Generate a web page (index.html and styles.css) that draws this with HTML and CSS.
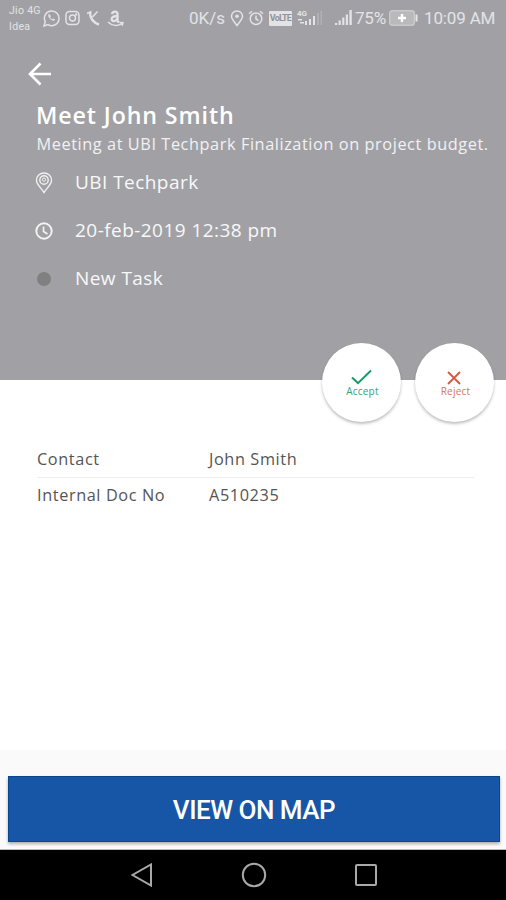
FILE: index.html
```
<!DOCTYPE html>
<html lang="en">
<head>
<meta charset="utf-8">
<title>Task details</title>
<link rel="stylesheet" href="styles.css">
</head>
<body>
<div class="screen">
  <header class="hero">
    <div class="status">
      <div class="carriers"><span>Jio 4G</span><span>Idea</span></div>
      <svg class="i-whatsapp" width="17" height="18" viewBox="0 0 17 18" fill="none" stroke="currentColor" stroke-width="1.5"><path d="M1 17l1.200-4.400A7.300 7.300 0 1 1 5 15.600z"/><path d="M5.700 5.300c-.9.8-.7 2.400 1 4.300s3.700 2.700 4.700 1.800l.6-1-1.900-1-1 .8c-1-.4-1.700-1.200-2-2l.7-.8-.8-2z" fill="currentColor" stroke="none"/></svg>
      <svg class="i-insta" width="15" height="16" viewBox="0 0 15 16" fill="none" stroke="currentColor" stroke-width="1.500"><rect x="1" y="1.500" width="13" height="13" rx="3.500"/><circle cx="7.500" cy="8" r="3"/><circle cx="11.200" cy="4.500" r=".5"/></svg>
      <svg class="i-call" width="13" height="16" viewBox="0 0 13 16" fill="none" stroke="currentColor"><path d="M3 2C3 8 6 12.500 12 14.500" stroke-width="2.400"/><path d="M0 3.500L4.500 1.500M5.500 7L10.500 1.500" stroke-width="1.600"/></svg>
      <svg class="i-amazon" width="17" height="17" viewBox="0 0 17 17" fill="none" stroke="currentColor"><path d="M5 4.200C5.500.8 10.500.8 10.500 4v7l1.500 1.500M10.500 6C6 6 4.500 7.500 4.700 9.300c.3 2.700 4.300 2.400 5.800-.8" stroke-width="2.400"/><path d="M1 12c4 4 10 4.500 14 1.500M12.500 12.500l3.500.2-1 3" stroke-width="1.500"/></svg>
      <span class="speed">0K/s</span>
      <svg class="i-pin" width="14" height="17" viewBox="0 0 14 17" fill="none" stroke="currentColor" stroke-width="1.500"><path d="M7 15.500C4 11.500 1.500 9.200 1.500 6.300a5.500 5.300 0 0 1 11 0c0 2.900-2.500 5.200-5.500 9.200z"/><circle cx="7" cy="6.300" r="1.800" fill="currentColor" stroke="none"/></svg>
      <svg class="i-alarm" width="16" height="16" viewBox="0 0 16 16" fill="none" stroke="currentColor" stroke-width="1.500"><circle cx="8" cy="8.700" r="5.800"/><path d="M8 5.500v3.500l2.500 1.500M1 3.800L4 1.200M12 1.200l3 2.600"/></svg>
      <span class="volte">VoLTE</span>
      <div class="lte"><span class="gen">4G</span><svg width="25" height="16" viewBox="0 0 25 16" fill="currentColor"><path d="M1 9h4v1.500H1zM3 12h4v1.500H3zM8 11h2v4H8zM12 9h2v6h-2zM16 6h2v9h-2z"/><path opacity=".25" d="M20 3h2v12h-2zM23.500 1H25v14h-1.500z"/></svg></div>
      <svg class="i-signal" width="17" height="16" viewBox="0 0 17 16" fill="currentColor"><path d="M0 13h2.200v2H0zM3.600 10.500h2.200V15H3.600zM7.200 7.500h2.200V15H7.200zM10.800 4.500H13V15h-2.200zM14.400 0h2.400v15h-2.400z"/></svg>
      <span class="percent">75%</span>
      <svg class="i-battery" width="29" height="16" viewBox="0 0 29 16"><rect x=".7" y=".7" width="24.600" height="14.600" rx="2.500" fill="#b9b9bc" stroke="#cacace" stroke-width="1.400"/><path d="M26.500 4.500h2v7h-2z" fill="#e6e6e8"/><path d="M13 4v8M9 8h8" stroke="#fff" stroke-width="2.400"/></svg>
      <span class="time">10:09 AM</span>
    </div>
    <svg class="back" width="24" height="24" viewBox="0 0 24 24" fill="none" stroke="#fff" stroke-width="2.600"><path d="M23 12H2M12.500 1.500L2 12l10.500 10.500"/></svg>
    <h1>Meet John Smith</h1>
    <p class="summary">Meeting at UBI Techpark Finalization on project budget.</p>
    <ul class="facts">
      <li><svg width="18" height="22" viewBox="0 0 18 22" fill="none" stroke="#efeff1" stroke-width="1.400"><path d="M9 20.500C5.500 15 1.500 12.500 1.500 8.200a7.500 7.200 0 0 1 15 0c0 4.300-4 6.800-7.500 12.300z"/><circle cx="9" cy="8" r="4.200"/><circle cx="9" cy="7.600" r="1.600" stroke-width="1"/></svg><span>UBI Techpark</span></li>
      <li><svg width="18" height="18" viewBox="0 0 18 18" fill="none" stroke="#f4f4f5" stroke-width="1.900"><circle cx="9" cy="9" r="7.700"/><path d="M8.500 4.500v5l4 2.500" stroke-width="1.600"/></svg><span>20-feb-2019 12:38 pm</span></li>
      <li><i class="dot"></i><span>New Task</span></li>
    </ul>
  </header>
  <main>
    <div class="actions">
      <button class="round accept"><svg width="21" height="16" viewBox="0 0 21 16" fill="none" stroke="#169b68" stroke-width="2"><path d="M1 8.500l6 5.700L20 1.500"/></svg><span>Accept</span></button>
      <button class="round reject"><svg width="14" height="14" viewBox="0 0 14 14" fill="none" stroke="#d9593d" stroke-width="1.900"><path d="M1 1l12 12M13 1L1 13"/></svg><span>Reject</span></button>
    </div>
    <dl class="details">
      <div><dt>Contact</dt><dd>John Smith</dd></div>
      <div><dt>Internal Doc No</dt><dd>A510235</dd></div>
    </dl>
  </main>
  <footer><button class="map">VIEW ON MAP</button></footer>
  <nav>
    <svg width="22" height="24" viewBox="0 0 22 24"><path d="M20 1.500v21L1.500 12z"/></svg>
    <svg width="26" height="26" viewBox="0 0 26 26"><circle cx="13" cy="13" r="11.200"/></svg>
    <svg width="22" height="22" viewBox="0 0 22 22"><rect x="1" y="1" width="20" height="20" rx="1"/></svg>
  </nav>
</div>
</body>
</html>
```
FILE: styles.css
```
* { box-sizing: border-box; }
body { margin: 0; font-family: "Open Sans", sans-serif; }
button { border: 0; padding: 0; font: inherit; }
h1, p, ul, dl, dd { margin: 0; padding: 0; }
svg { display: block; flex: none; }

.screen { width: 506px; height: 900px; display: flex; flex-direction: column; background: #fff; overflow: hidden; }
.hero { height: 380px; flex: none; background: #a1a1a5; color: #fff; }

.status { height: 36px; display: flex; align-items: center; padding-left: 9px; font-family: Roboto, sans-serif; font-size: 17px; line-height: 20px; color: #e3e3e6; white-space: nowrap; }
.status span { flex: none; }
.carriers { width: 34px; display: flex; flex-direction: column; font-size: 10.500px; line-height: 16px; padding-top: 1px; letter-spacing: .3px; }
.i-insta { margin-left: 5px; }
.i-call { margin-left: 7px; }
.i-amazon { margin-left: 7px; }
.speed { width: 41px; margin-left: 65px; }
.i-alarm { margin-left: 4px; }
.volte { width: 23px; height: 15px; margin-left: 5px; border-radius: 1px; background: #e3e3e6; color: #919196; font-size: 9px; line-height: 15px; font-weight: 700; text-align: center; letter-spacing: -.8px; }
.lte { position: relative; width: 25px; margin-left: 5px; }
.gen { position: absolute; left: 0; top: 0; font-size: 8px; line-height: 8px; font-weight: 700; }
.i-signal { margin-left: 13px; }
.percent { width: 34px; margin-left: 3px; letter-spacing: -.2px; }
.time { margin-left: 6px; letter-spacing: -.15px; }

.back { margin: 26px 0 0 28px; }
h1 { margin: 13px 0 0 36px; font-size: 23.200px; line-height: 32px; font-weight: 600; letter-spacing: .9px; white-space: nowrap; }
.summary { margin: 1px 0 0 36.500px; font-size: 16.300px; line-height: 24px; letter-spacing: .58px; white-space: nowrap; color: #f1f1f3; }
.facts { list-style: none; margin-top: 3px; padding-left: 35px; }
.facts li { height: 48px; display: flex; align-items: center; gap: 22px; font-size: 19px; letter-spacing: .45px; color: #f8f8f9; white-space: nowrap; }
.facts span { margin-top: -2px; }
.dot { width: 14px; height: 14px; border-radius: 50%; background: #808080; margin: 0 2px; }

main { height: 370px; flex: none; }
.actions { position: relative; display: flex; justify-content: flex-end; gap: 14px; margin-top: -37px; padding-right: 12px; }
.round { width: 79px; height: 79px; border-radius: 50%; background: #fff; box-shadow: 0 2px 3px rgba(0,0,0,.25); display: flex; flex-direction: column; align-items: center; justify-content: flex-end; padding-bottom: 24px; font-size: 10px; line-height: 13px; letter-spacing: .2px; }
.round span { margin-left: 2px; }
.accept { color: #36a57d; }
.reject { color: #d9725c; }
.reject svg { margin-right: 2px; }
.details { margin: 19px 32px 0 37px; font-size: 16.300px; line-height: 36px; color: #555; letter-spacing: .6px; }
.details div { display: grid; grid-template-columns: 172px 1fr; height: 36px; white-space: nowrap; }
.details div:first-child { height: 37px; border-bottom: 1px solid #eee; }
.details div:last-child { line-height: 34px; }

footer { height: 100px; flex: none; background: #fafafa; padding: 26px 6px 8px 8px; border-bottom: 1px solid #bbb; }
.map { display: block; width: 492px; height: 66px; background: #1756a6; border: 1px solid #084690; box-shadow: 0 2px 3px rgba(0,0,0,.3); color: #fff; font-family: Roboto, sans-serif; font-size: 26px; font-weight: 500; letter-spacing: -.5px; padding-top: 2px; }
nav { height: 50px; background: #000; display: flex; justify-content: center; align-items: center; gap: 88px; padding-left: 1px; }
nav svg { fill: none; stroke: #a9a9a9; stroke-width: 2; }
```
